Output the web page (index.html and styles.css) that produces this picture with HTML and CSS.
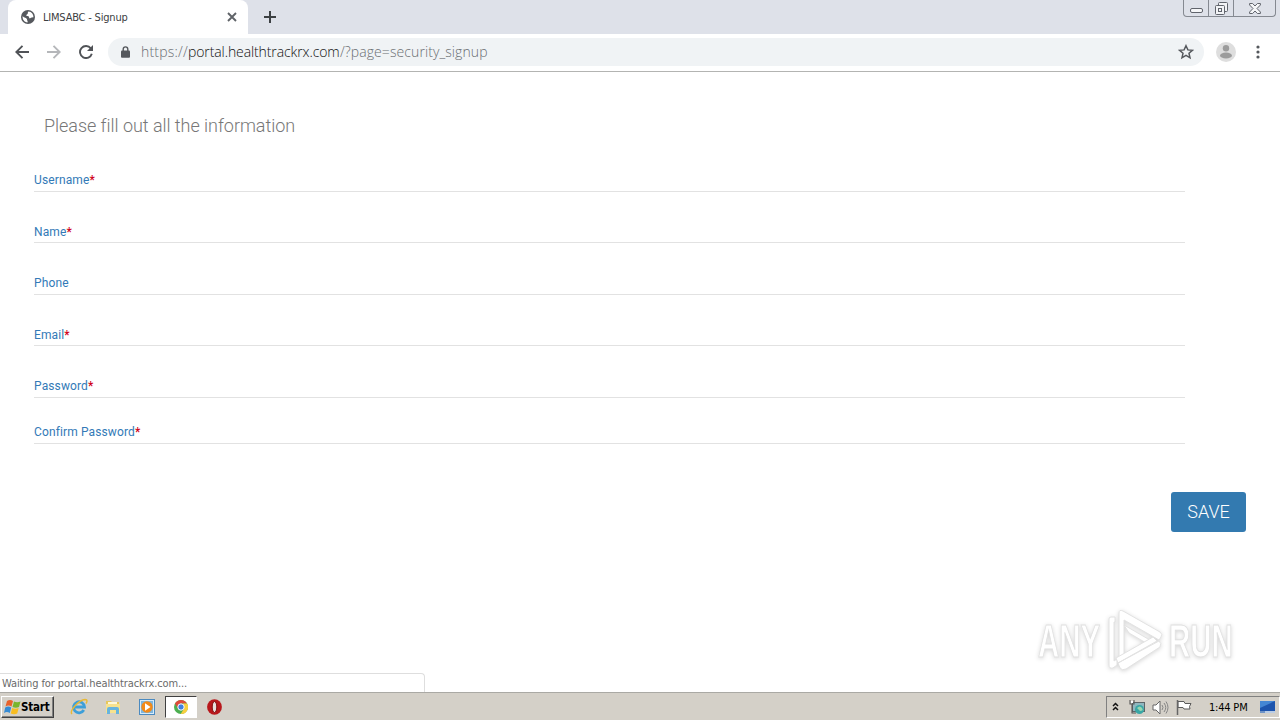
FILE: index.html
```html
<!DOCTYPE html>
<html lang="en">
<head>
  <meta charset="UTF-8" />
  <meta name="viewport" content="width=device-width, initial-scale=1.0" />
  <title>LIMSABC - Signup</title>
  <link rel="stylesheet" href="styles.css">
</head>
<body>
  <!-- Tab strip -->
  <div class="tabstrip">
    <div class="tab-edge"></div>
    <div class="tab">
      <svg class="globe" width="14" height="14" viewBox="0 0 14 14"><circle cx="7" cy="7" r="7" fill="#55585d"/><path d="M7.6 1.5C6 2.2 7.7 3.2 6.2 4.2 5 4.8 5 6 6.4 6.1 8 6 8.3 7.2 8.1 8.2 9.8 8.4 10 7 12.5 7.2 12.4 4 10.5 1.8 7.6 1.5ZM1.6 6.2C1.3 9 3.2 12.2 6.5 12.5 7.2 10.9 5.8 10.6 6 9.2 5.2 7.4 3.5 8 1.6 6.2Z" fill="#fff"/></svg>
      <span class="tab-title">LIMSABC - Signup</span>
      <svg width="10" height="10" viewBox="0 0 10 10"><path d="M1 1l8 8M9 1L1 9" stroke="#5f6368" stroke-width="1.9"/></svg>
    </div>
    <svg class="new-tab" width="12" height="12" viewBox="0 0 12 12"><path d="M6 0v12M0 6h12" stroke="#3c4043" stroke-width="2"/></svg>
    <div class="window-buttons">
      <div class="wb wb-min"><svg width="13" height="5" viewBox="0 0 13 5"><rect x=".5" y=".5" width="12" height="4" rx="1.5" fill="#f5f6f8" stroke="#60646c"/></svg></div>
      <div class="wb wb-max"><svg width="13" height="13" viewBox="0 0 13 13" fill="#f2f3f6" stroke="#60646c"><rect x="3.5" y=".5" width="9" height="9" rx="1"/><rect x=".5" y="3.5" width="9" height="9" rx="1"/><rect x="3.5" y="6.5" width="3" height="3"/></svg></div>
      <div class="wb wb-close"><svg width="12" height="11" viewBox="0 0 12 11"><path d="M.6.5h3L6 3 8.400.5h3v1.5L8 5.5l3.400 3.5v1.5h-3L6 8l-2.400 2.5h-3V9L4 5.5.6 2z" fill="#f5f6f8" stroke="#60646c"/></svg></div>
    </div>
  </div>

  <!-- Toolbar -->
  <div class="toolbar">
    <svg class="nav-icon" width="14" height="14" viewBox="0 0 14 14" fill="none" stroke="#505357" stroke-width="1.9"><path d="M14 7H1.5M7.5.8L1.3 7l6.200 6.200"/></svg>
    <svg class="nav-icon" width="14" height="14" viewBox="0 0 14 14" fill="none" stroke="#b5b7ba" stroke-width="1.9"><path d="M0 7h12.500M6.500.8L12.700 7l-6.200 6.200"/></svg>
    <svg class="nav-icon" width="14" height="14" viewBox="0 0 14 14"><path d="M11.800 3.400A6 6 0 1 0 12.800 8.700" fill="none" stroke="#505357" stroke-width="1.9"/><path d="M14 0v6H8z" fill="#505357"/></svg>
    <div class="omnibox">
      <svg width="9" height="12" viewBox="0 0 9 12"><path d="M2.200 5V3.200a2.300 2.300 0 0 1 4.600 0V5" fill="none" stroke="#55585d" stroke-width="1.4"/><rect y="4.400" width="9" height="7.400" rx="1" fill="#55585d"/></svg>
      <div class="url"><span class="url-scheme">https://</span><span class="url-host">portal.healthtrackrx.com</span><span class="url-path">/?page=security_signup</span></div>
      <svg class="star" width="16" height="16" viewBox="0 0 16 16"><path d="M8 1.700l1.900 4.200 4.500.4L11 9.300l1 4.500-4-2.400-4 2.400 1-4.500-3.400-3 4.500-.4z" fill="none" stroke="#55585d" stroke-width="1.5"/></svg>
    </div>
    <svg class="avatar" width="20" height="20" viewBox="0 0 20 20"><circle cx="10" cy="10" r="10" fill="#dedede"/><circle cx="10" cy="6.300" r="3.200" fill="#9c9c9c"/><ellipse cx="10" cy="13.500" rx="6" ry="3" fill="#9c9c9c"/></svg>
    <svg class="menu" width="4" height="14" viewBox="0 0 4 14" fill="#55585d"><circle cx="2" cy="2" r="1.600"/><circle cx="2" cy="7" r="1.600"/><circle cx="2" cy="12" r="1.600"/></svg>
  </div>

  <!-- Page -->
  <div class="page">
    <h1>Please fill out all the information</h1>
    <form class="signup">
      <label class="field"><span>Username<b>*</b></span></label>
      <label class="field field-low"><span>Name<b>*</b></span></label>
      <label class="field"><span>Phone</span></label>
      <label class="field field-low"><span>Email<b>*</b></span></label>
      <label class="field"><span>Password<b>*</b></span></label>
      <label class="field"><span>Confirm Password<b>*</b></span></label>
    </form>
    <div class="actions"><button type="button" class="save">SAVE</button></div>
    <div class="watermark">
      <span class="wm-text wm-any">ANY</span>
      <svg class="wm-logo" width="58" height="66" viewBox="0 0 58 66"><g fill="#fff" stroke="#e2e2e2" stroke-width="1"><path d="M3 11q0-2 2-2h4v5H8v39l3-2v6l-4 3q-4 1-4-3z"/><path d="M13 52V5q0-4 4-2l37 21q3 2 1 5l-2 3-35-20v40z"/><path d="M18 17l31 18-2 4-24-14z"/><path d="M12 55l41-22q3 2 1 6L20 61q-4 2-6-1zM10 50l37-21 4 4-39 22z"/></g></svg>
      <span class="wm-text wm-run">RUN</span>
    </div>
    <div class="status">Waiting for portal.healthtrackrx.com...</div>
  </div>

  <!-- Taskbar -->
  <div class="taskbar">
    <div class="start">
      <svg width="17" height="16" viewBox="0 0 17 16"><path d="M3 2q3-2 6 0L7.500 7.500q-3-2-6 0z" fill="#e9622b"/><path d="M10 2.500q3 1.500 6.500 0L15 8q-3 1.500-6.500 0z" fill="#79b52e"/><path d="M1.200 8.500q3-2 6 0L5.800 14q-3-2-5.800 0z" fill="#368bd4"/><path d="M8.200 9q3 1.500 6.500 0L13.200 14.500q-3 1.500-6.500 0z" fill="#f7bd22"/></svg>
      <span>Start</span>
    </div>
    <div class="quick">
      <svg width="18" height="18" viewBox="0 0 18 18"><path d="M13.800 12A5.500 5.500 0 1 1 14.500 9H5" fill="none" stroke="#3d9fd9" stroke-width="2.800"/><path d="M2 16C-1 13 9 2 15 1.500 18 1.500 17 4 16 5.500" fill="none" stroke="#e9b934" stroke-width="1.400"/></svg>
    </div>
    <div class="quick">
      <svg width="16" height="16" viewBox="0 0 16 16"><path d="M1 2h5l1 1h7v10H1z" fill="#e6c75d"/><path d="M3 3h9v3H3z" fill="#fff8d8"/><path d="M1 5h14v9H1z" fill="#f7e28e"/><path d="M2 15v-5q0-2 2-2h8q2 0 2 2v5h-3v-4H5v4z" fill="#67b4de"/></svg>
    </div>
    <div class="quick">
      <svg width="16" height="16" viewBox="0 0 16 16"><rect x=".5" y=".5" width="15" height="15" fill="#d6ebfa" stroke="#4b8ac0"/><rect x="2" y="2" width="12" height="12" fill="#7db6df"/><circle cx="8" cy="8" r="5.700" fill="#f28a19"/><path d="M6 4.200l5.500 3.800L6 11.800z" fill="#fff"/></svg>
    </div>
    <div class="quick quick-active">
      <svg width="14" height="14" viewBox="0 0 14 14"><circle cx="7" cy="7" r="7" fill="#4caf50"/><path d="M1 3.500A7 7 0 0 1 13 3.500H7L4.200 8.800z" fill="#df4a3a"/><path d="M13.100 3.500A7 7 0 0 1 6.700 14L10 8.700 9 3.500z" fill="#f8cf3e"/><circle cx="7" cy="7" r="3.200" fill="#3f80e0" stroke="#fff"/></svg>
    </div>
    <div class="quick">
      <svg width="15" height="16" viewBox="0 0 15 16"><ellipse cx="7.500" cy="8" rx="7.400" ry="7.800" fill="#b8171b"/><ellipse cx="7.500" cy="8" rx="2.300" ry="5.500" fill="#e8dfdc" stroke="#7d0b0d"/></svg>
    </div>
    <div class="tray">
      <svg class="tray-more" width="7" height="9" viewBox="0 0 7 9" fill="none" stroke="#111" stroke-width="1.500"><path d="M1 4l2.500-2.500L6 4M1 8l2.500-2.500L6 8"/></svg>
      <svg class="tray-net" width="17" height="16" viewBox="0 0 17 16"><rect x="3.500" y="3.500" width="12" height="9" fill="#8fb7bf" stroke="#5d6468"/><circle cx="10.500" cy="10.500" r="4.500" fill="#38a7a5"/><path d="M8 9q3-3 5 0t-2 3z" fill="#9ad6b0"/><path d="M1 1v4h4V1M3 5v9h4" fill="none" stroke="#555" stroke-width="1.100"/><path d="M2 2h2v2H2z" fill="#fff"/></svg>
      <svg class="tray-sound" width="17" height="15" viewBox="0 0 17 15"><path d="M1 5h3l4-4v13l-4-4H1z" fill="#fff" stroke="#666"/><path d="M10 5q2 2.500 0 5M12 3q3.500 4.500 0 9M14 1.500q4 6 0 12" fill="none" stroke="#858585"/></svg>
      <svg class="tray-flag" width="17" height="15" viewBox="0 0 17 15"><path d="M2 1.500h6l1 2h6l-1.500 3L14 9H8L7 7.500H2z" fill="#fff" stroke="#5b5b5b"/><path d="M1.500 0v15" stroke="#666" stroke-width="1.500"/></svg>
      <span class="clock">1:44 PM</span>
      <svg class="tray-desk" width="15" height="14" viewBox="0 0 15 14"><path d="M0 1h15v10H0z" fill="#1d54ad"/><path d="M0 1h15L0 8z" fill="#4486d4"/><path d="M0 11h15v2H0z" fill="#b9cce5"/><path d="M0 12h5" stroke="#275ca9"/></svg>
    </div>
  </div>
</body>
</html>
```
FILE: styles.css
```css
* {
  box-sizing: border-box;
}
body {
  margin: 0;
  width: 1280px;
  height: 720px;
  overflow: hidden;
  display: flex;
  flex-direction: column;
  background: #fff;
  font-family: Roboto, sans-serif;
}
svg {
  display: block;
  flex: none;
}

/* tab strip */
.tabstrip {
  height: 34px;
  flex: none;
  display: flex;
  background: #dee1e9;
}
.tab-edge {
  width: 8px;
  background: #dee1e9;
}
.tab {
  width: 240px;
  background: #fff;
  border-radius: 8px 8px 0 0;
  display: flex;
  align-items: center;
  padding: 0 11px 0 13px;
}
.tab-title {
  flex: 1;
  margin-left: 8px;
  font: 11px "DejaVu Sans Condensed", "DejaVu Sans", sans-serif;
  font-stretch: condensed;
  letter-spacing: -0.2px;
  color: #3c4043;
  white-space: nowrap;
}
.new-tab {
  margin: 11px 0 0 16px;
}
.window-buttons {
  margin: 0 4px 0 auto;
  width: 93px;
  height: 17px;
  display: flex;
  border: 1px solid #858991;
  border-top: none;
  border-radius: 0 0 4px 4px;
}
.wb {
  display: flex;
  justify-content: center;
  align-items: center;
}
.wb-min {
  width: 24px;
  padding-top: 4px;
}
.wb-max {
  width: 26px;
  border-left: 1px solid #858991;
  border-right: 1px solid #858991;
}
.wb-close {
  flex: 1;
}

/* toolbar */
.toolbar {
  height: 38px;
  flex: none;
  display: flex;
  align-items: center;
  padding: 0 20px 2px 15px;
  border-bottom: 1px solid #b3b4b2;
}
.nav-icon {
  margin-right: 18px;
}
.omnibox {
  width: 1096px;
  height: 28px;
  margin-left: -3px;
  padding: 0 10px 0 13px;
  display: flex;
  align-items: center;
  background: #f0f3f5;
  border-radius: 14px;
}
.url {
  flex: 1;
  display: flex;
  margin-left: 11px;
  font: 300 14px "Open Sans", sans-serif;
  color: #6a6e72;
  white-space: nowrap;
}
.url-scheme {
  width: 47px;
  letter-spacing: 0.2px;
}
.url-host {
  width: 152px;
  color: #111;
  letter-spacing: -0.1px;
}
.url-path {
  letter-spacing: 0.08px;
}
.avatar {
  margin-left: 12px;
}
.menu {
  margin-left: auto;
}

/* page */
.page {
  height: 620px;
  flex: none;
  position: relative;
}
h1 {
  margin: 0;
  height: 74px;
  padding: 43px 0 0 44px;
  font-size: 18px;
  line-height: 22px;
  font-weight: 300;
  letter-spacing: -0.04px;
  color: #777;
}
.signup {
  width: 1151px;
  margin-left: 34px;
  display: grid;
  grid-template-rows: 46px 51px 52px 51px 52px 46px;
}
.field {
  display: flex;
  align-items: flex-end;
  padding-bottom: 4px;
  border-bottom: 1px solid #e2e2e2;
  font-size: 12px;
  line-height: 14px;
  letter-spacing: 0.12px;
  color: #337ab7;
}
.field-low {
  padding-bottom: 3px;
}
.field b {
  color: #d0021b;
  font-weight: 500;
}
.actions {
  display: flex;
  justify-content: flex-end;
  padding: 48px 34px 0 0;
}
.save {
  width: 75px;
  height: 40px;
  padding: 0 0 2px;
  border: none;
  border-radius: 3px;
  background: #337ab0;
  color: #fff;
  font: 300 18px Roboto, sans-serif;
}
.watermark {
  position: absolute;
  left: 1038px;
  top: 536px;
  width: 196px;
  height: 66px;
  display: flex;
  align-items: center;
  filter: drop-shadow(0 1px 2px rgba(0, 0, 0, 0.16));
}
.wm-text {
  width: 64px;
  font: 700 46px/50px "Liberation Sans", Arial, sans-serif;
  color: #fff;
  -webkit-text-stroke: 1px #e0e0e0;
  transform: scaleX(0.64);
  transform-origin: left center;
}
.wm-logo {
  margin: 0 5px 0 4px;
}
.status {
  position: absolute;
  left: 0;
  bottom: 0;
  width: 425px;
  height: 19px;
  padding-left: 2px;
  border: 1px solid #dedede;
  border-left: none;
  border-bottom: none;
  border-top-right-radius: 4px;
  background: #fff;
  font: 11px/20px "DejaVu Sans Condensed", "DejaVu Sans", sans-serif;
  font-stretch: condensed;
  letter-spacing: -0.1px;
  color: #6a6a6a;
}

/* taskbar */
.taskbar {
  height: 28px;
  flex: none;
  display: flex;
  align-items: center;
  padding: 1px 0 0 1px;
  background: #d4d0c8;
  border-top: 1px solid #aaa9a4;
}
.start {
  width: 53px;
  height: 22px;
  margin-right: 9px;
  padding-left: 2px;
  display: flex;
  align-items: center;
  border: 1px solid;
  border-color: #fff #404040 #404040 #fff;
  box-shadow: inset -1px -1px #808080;
  font: bold 11.5px "DejaVu Sans Condensed", "DejaVu Sans", sans-serif;
  font-stretch: condensed;
  letter-spacing: -0.2px;
  color: #000;
}
.quick {
  width: 32px;
  height: 22px;
  margin-right: 2px;
  display: flex;
  align-items: center;
  justify-content: center;
}
.quick-active {
  margin-right: 1px;
  background: #fff;
  border: 1px solid;
  border-color: #404040 #fff #fff #404040;
}
.tray {
  width: 174px;
  height: 22px;
  margin-left: auto;
  padding: 0 4px 0 5px;
  display: flex;
  align-items: center;
  border: 1px solid;
  border-color: #808080 #fff #fff #808080;
}
.tray-more {
  margin-bottom: 2px;
}
.tray-net {
  margin-left: 10px;
}
.tray-sound {
  margin-left: 6px;
}
.tray-flag {
  margin-left: 7px;
}
.clock {
  margin-left: 16px;
  font: 11px "DejaVu Sans Condensed", "DejaVu Sans", sans-serif;
  font-stretch: condensed;
  letter-spacing: -0.2px;
  color: #000;
  white-space: nowrap;
}
.tray-desk {
  margin-left: auto;
}
```
